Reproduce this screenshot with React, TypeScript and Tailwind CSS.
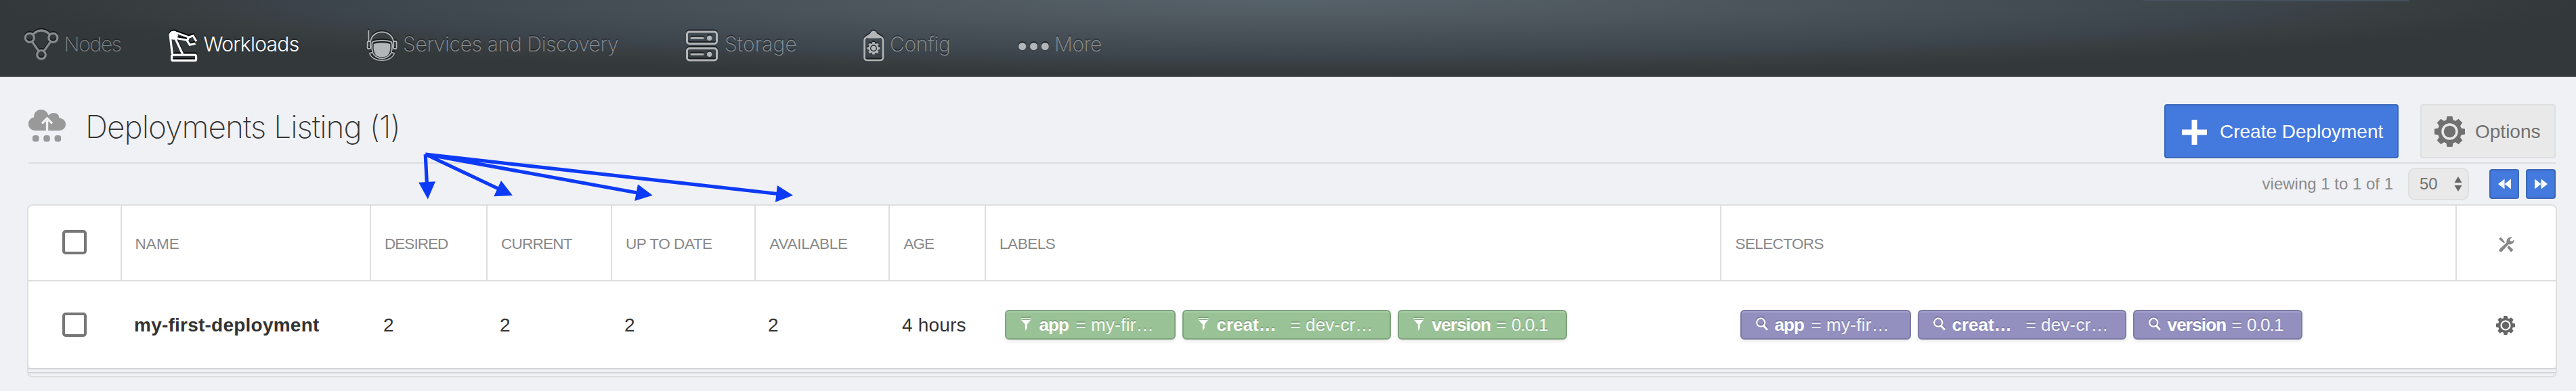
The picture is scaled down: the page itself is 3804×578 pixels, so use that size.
import type { ReactNode } from "react";

const NAV_SHADOW = "drop-shadow-[0_-2px_0_rgba(0,0,0,0.55)]";

function NodesIcon() {
  return (
    <svg width="52" height="52" viewBox="0 0 52 52" fill="none" stroke="#888c8e" strokeWidth="3.2" className={NAV_SHADOW}>
      <circle cx="7.8" cy="15.8" r="6.5" />
      <circle cx="42.4" cy="15.8" r="6.5" />
      <circle cx="25" cy="40.8" r="6.3" />
      <path d="M12.5 10.8 Q25 -0.8 37.5 10.8M11.5 21.5 21.3 35.6M38.7 21.5 28.7 35.6" />
    </svg>
  );
}

function RobotArmIcon() {
  return (
    <svg width="46" height="52" viewBox="0 0 46 52" fill="none" stroke="#fff" strokeWidth="3.2" className="drop-shadow-[0_-2px_0_#000]">
      <circle cx="7.2" cy="12.2" r="6.6" fill="#fff" stroke="none" />
      <path d="M2.4 14 5.4 40M10 17 20.8 40" />
      <path d="M8 7 29 14.6M11 16.5 27.5 19.3" strokeWidth="2.8" />
      <path d="M41 21 36.2 13 29.2 15.2 27.6 20.5 31.2 26.2 39.6 24.4" />
      <rect x="4.6" y="41.2" width="36" height="8.2" rx="2" />
    </svg>
  );
}

function HelmetIcon() {
  return (
    <svg width="46" height="52" viewBox="0 0 46 52" fill="none" stroke="#b3b6b8" strokeWidth="1.8" className={NAV_SHADOW}>
      <path d="M3.4 4.5V21" />
      <path d="M6.2 22C7.5 2.500 38.500 2.500 40 22" />
      <rect x="1.6" y="21" width="4.6" height="11" rx="1.5" />
      <rect x="40" y="21" width="4.6" height="11" rx="1.5" />
      <path d="M9.500 37C7.500 31 8 25 9 22 16 19.300 30 19.300 37.200 22 38.200 25 38.600 31 36.700 37" />
      <path d="M10.900 25C17 22.500 29 22.500 35.100 25 36 33 34.500 38.500 31 42.500 26 45 20 45 15 42.500 11.500 38.500 10 33 10.900 25Z" fill="#b3b6b8" stroke="none" />
      <path d="M9 37.500 4.800 38.500C5.500 43 12 49.300 23 49.300 34 49.300 40.500 43 41.200 38.500L37 37.500C34 43 30 46.500 23 46.500 16 46.500 12 43 9 37.500Z" strokeWidth="1.6" />
    </svg>
  );
}

function StorageIcon() {
  return (
    <svg width="50" height="52" viewBox="0 0 50 52" fill="none" stroke="#b3b6b8" strokeWidth="3" className={NAV_SHADOW}>
      <rect x="2.5" y="7" width="44" height="17.500" rx="3.500" />
      <rect x="2.5" y="31.500" width="44" height="17.500" rx="3.500" />
      <path d="M9 16.200H26M9 40.300H26" strokeLinecap="round" />
      <circle cx="35.700" cy="16.200" r="3.700" fill="#b3b6b8" stroke="none" />
      <circle cx="35.700" cy="40.300" r="3.700" fill="#b3b6b8" stroke="none" />
    </svg>
  );
}

function GearShape({ color }: { color: string }) {
  return (
    <g fill={color}>
      <circle r="9.300" fill="none" stroke={color} strokeWidth="3.400" />
      <circle r="5.400" />
      {[0, 45, 90, 135, 180, 225, 270, 315].map((a) => (
        <path key={a} d="M-3.300-9.800-2.500-14H2.500L3.300-9.800Z" transform={`rotate(${a})`} />
      ))}
    </g>
  );
}

function Gear({ size, color }: { size: number; color: string }) {
  return (
    <svg width={size} height={size} viewBox="-14 -14 28 28">
      <GearShape color={color} />
    </svg>
  );
}

function ConfigIcon() {
  return (
    <svg width="32" height="52" viewBox="0 0 32 52" className={NAV_SHADOW}>
      <path d="M2.500 20V44.500Q2.500 49 7 49H25.500Q30 49 30 44.500V20Q30 15.500 26 14.500H6.500Q2.500 15.500 2.500 20Z" fill="none" stroke="#b3b6b8" strokeWidth="2.600" />
      <path d="M3.500 14.500 11 9.500Q12.500 5.500 16 5.500T21 9.500L29 14.500 24 16.500H8.500Z" fill="#b3b6b8" />
      <g transform="translate(16 31.300) scale(0.66)">
        <GearShape color="#b3b6b8" />
      </g>
    </svg>
  );
}

function DotsIcon() {
  return (
    <svg width="48" height="52" viewBox="0 0 48 52" fill="#b3b6b8" className={NAV_SHADOW}>
      <circle cx="6.700" cy="28.500" r="5.500" />
      <circle cx="23.500" cy="28.500" r="5.500" />
      <circle cx="40.300" cy="28.500" r="5.500" />
    </svg>
  );
}

function NavItem({ icon, label, item, slot, text }: { icon: ReactNode; label: string; item: string; slot: string; text: string }) {
  return (
    <a className={`flex shrink-0 items-start ${item}`}>
      <span className={`shrink-0 ${slot}`}>{icon}</span>
      <span className={`whitespace-nowrap font-[Inter,sans-serif] text-[30px] leading-[50px] [text-shadow:0_-2px_0_rgba(0,0,0,0.4)] ${text}`}>{label}</span>
    </a>
  );
}

function CloudIcon() {
  return (
    <svg width="56" height="50" viewBox="0 0 56 50" fill="#999" className="shrink-0">
      <path d="M10.500 31C4 31 0 26.500 0 21.500 0 16 3.500 12 8 11.500 8 4 13 0 18.500 0 24 0 28 3.500 29.500 8.500 31.500 6 34.500 5 37.500 5 42.500 5 45.500 8.500 45.500 12.500 51 13 55 16.500 55 21.500 55 27 51 31 45 31Z" />
      <path d="M27.500 31.500V15M20 20.500 27.500 13 35 20.500" fill="none" stroke="#f0f1f5" strokeWidth="3.400" />
      <rect x="6" y="38" width="9.500" height="9.500" rx="3.500" />
      <rect x="22.300" y="38" width="9.500" height="9.500" rx="3.500" />
      <rect x="38.600" y="38" width="9.500" height="9.500" rx="3.500" />
    </svg>
  );
}

function ToolsIcon() {
  return (
    <svg width="23" height="23" viewBox="0 0 22 22" fill="#888">
      <path d="M0 3 2.800 .8 5.300 3 8.500 8 7.300 9 3 5.800Z" />
      <path d="M14 12.500 20.500 18.500 17.500 21.700 11.800 15.200Z" />
      <path d="M1 17.500 11 8.300C10.200 4 13.500-.5 18.800 .5L15.800 3.500 16.200 6 18.800 6.400 21.800 4C22 8.500 18.500 11.500 13.800 10.800L4 21.200Q1.800 22 .5 20Z" />
    </svg>
  );
}

function FunnelIcon() {
  return (
    <svg width="17" height="20" viewBox="0 0 17 20" fill="#fff" className="drop-shadow-[0_-2px_0_rgba(0,0,0,0.18)]">
      <path d="M.5 1.500H15.500V3H.5ZM1 4H15L9.800 10.500V16L7.300 19.500H6.800V10.500Z" />
    </svg>
  );
}

function SearchIcon() {
  return (
    <svg width="18" height="20" viewBox="0 0 18 20" fill="none" stroke="#fff" className="drop-shadow-[0_-2px_0_rgba(0,0,0,0.18)]">
      <circle cx="7.200" cy="7.700" r="6" strokeWidth="2.200" />
      <path d="M11 12 16.800 18.600" strokeWidth="3" />
    </svg>
  );
}

interface Tag {
  name: string;
  value: string;
  box: string;
  nameClass: string;
  valueClass: string;
}

const TAGS: Tag[] = [
  { name: "app", value: "my-fir…", box: "w-[252px]", nameClass: "w-[54px] tracking-[-0.9px]", valueClass: "tracking-[0.3px]" },
  { name: "creat…", value: "dev-cr…", box: "w-[308px]", nameClass: "w-[109px]", valueClass: "tracking-[0.2px]" },
  { name: "version", value: "0.0.1", box: "w-[250px]", nameClass: "w-[95px] tracking-[-0.8px]", valueClass: "tracking-[-0.85px]" },
];

function Tags({ icon, tone }: { icon: ReactNode; tone: string }) {
  return (
    <div className="flex gap-[10px] pl-[28px]">
      {TAGS.map((t) => (
        <span
          key={t.name}
          className={`flex h-[44px] items-center rounded-[6px] border-2 pl-[21px] text-[26px] leading-[40px] text-white whitespace-nowrap [text-shadow:0_-2px_0_rgba(0,0,0,0.18)] ${tone} ${t.box}`}
        >
          <span className="w-[27.500px] shrink-0 pb-[2px]">{icon}</span>
          <b className={`shrink-0 ${t.nameClass}`}>{t.name}</b>
          <span className="w-[22.500px] shrink-0 text-white/80">=</span>
          <span className={`text-white/95 ${t.valueClass}`}>{t.value}</span>
        </span>
      ))}
    </div>
  );
}

function Checkbox({ className = "" }: { className?: string }) {
  return <span className={`mx-auto block size-[36px] rounded-[5px] border-4 border-[#777] bg-white ${className}`} />;
}

const COLS = "grid grid-cols-[138px_368px_172px_184px_212px_198px_142px_1086px_1086px_146px]";

const HEADS = [
  { t: "NAME", c: "pl-[19.500px] tracking-[0.1px]" },
  { t: "DESIRED", c: "pl-[20px] tracking-[-0.95px]" },
  { t: "CURRENT", c: "pl-[20px] tracking-[-0.73px]" },
  { t: "UP TO DATE", c: "pl-[20px] tracking-[-0.45px]" },
  { t: "AVAILABLE", c: "pl-[20.500px] tracking-[-0.31px]" },
  { t: "AGE", c: "pl-[20.500px] tracking-[-1px]" },
  { t: "LABELS", c: "pl-[20px] tracking-[-0.44px]" },
  { t: "SELECTORS", c: "pl-[20.500px] tracking-[-0.62px]" },
];

function Arrows() {
  return (
    <svg width="580" height="90" viewBox="610 215 580 90" className="pointer-events-none absolute left-[610px] top-[215px]" fill="#0d3af6">
      <path d="M628.200 228 630.300 270M628.200 228 736 279M628.200 228 941 285M628.200 228 1148 286.500" fill="none" stroke="#0d3af6" strokeWidth="5.200" />
      <path d="M618.200 269.700 643 268.300 631.800 294.500ZM740 267 729.300 290.200 757 289ZM942 272.500 937.200 297 963.700 288.800ZM1147.800 274 1145 298.800 1171 288.800Z" />
    </svg>
  );
}

export default function App() {
  return (
    <div className="relative flex h-[578px] w-[3804px] flex-col overflow-hidden bg-[#f0f1f5] font-['Liberation_Sans',Arial,sans-serif]">
      <header className="flex h-[114px] shrink-0 items-start border-b-2 border-[#4f5558] bg-[radial-gradient(1902px_112px_at_50%_0,#56626a_0%,#4c545b_38%,#3c444c_75%,#393e41_86%,#33383b_100%)] pl-[36px]">
        <nav className="flex h-[50px] flex-1 pt-[40px]">
          <NavItem icon={<NodesIcon />} label="Nodes" item="w-[213px]" slot="w-[58.500px]" text="font-extralight tracking-[-1.3px] text-[#7e8385]" />
          <NavItem icon={<RobotArmIcon />} label="Workloads" item="w-[292px]" slot="w-[51.500px]" text="font-light tracking-[-0.7px] text-white" />
          <NavItem icon={<HelmetIcon />} label="Services and Discovery" item="w-[471px]" slot="w-[54px]" text="font-extralight tracking-[-0.27px] text-[#8c9194]" />
          <NavItem icon={<StorageIcon />} label="Storage" item="w-[262px]" slot="w-[58px]" text="font-extralight tracking-[0.2px] text-[#8c9194]" />
          <NavItem icon={<ConfigIcon />} label="Config" item="w-[229px]" slot="w-[40px]" text="font-extralight tracking-[-0.25px] text-[#8c9194]" />
          <NavItem icon={<DotsIcon />} label="More" item="w-[140px]" slot="w-[54px]" text="font-extralight tracking-[-0.4px] text-[#8c9194]" />
        </nav>
        <div className="mr-[247px] h-[2px] w-[392px] bg-[#45515c]" />
      </header>

      <section className="ml-[42px] mr-[30px] flex h-[128px] shrink-0 items-start justify-between border-b-2 border-[#dcdddd] pt-[40px]">
        <div className="flex h-[66px] items-center">
          <CloudIcon />
          <h1 className="ml-[28px] whitespace-nowrap font-[Inter,sans-serif] text-[46px] font-extralight leading-[66px] tracking-[-0.97px] text-[#333]">Deployments Listing (1)</h1>
        </div>
        <div className="flex gap-[32px] text-[28px]">
          <button className="flex h-[80px] w-[346px] items-center whitespace-nowrap rounded-[4px] border-2 border-[#3a68b8] bg-[#4479dd] pl-[24px] text-white">
            <svg width="37" height="37" viewBox="0 0 37 37" className="mr-[19px] mt-[3px]" fill="#fff">
              <path d="M14.500 0H22.500V14.500H37V22.500H22.500V37H14.500V22.500H0V14.500H14.500Z" />
            </svg>
            <span className="pt-[1px]">Create Deployment</span>
          </button>
          <button className="flex h-[80px] w-[200px] items-center whitespace-nowrap rounded-[4px] border-2 border-[#dedfdf] bg-[#e9e9e9] pl-[19px] text-[#707070]">
            <span className="mr-[15px]">
              <Gear size={45} color="#707070" />
            </span>
            <span className="pt-[1px]">Options</span>
          </button>
        </div>
      </section>

      <div className="mr-[30px] flex h-[60px] shrink-0 items-center justify-end">
        <span className="mr-[22px] whitespace-nowrap text-[24px] text-[#8a8a8a]">viewing 1 to 1 of 1</span>
        <div className="mr-[30px] flex h-[48px] w-[90px] items-center rounded-[10px] border-2 border-[#dedfdf] bg-[#e9e9e9] pl-[15px] text-[24px] text-[#707070]">
          50
          <svg width="12" height="22" viewBox="0 0 12 22" className="ml-[24px]" fill="#666">
            <path d="M6 0 11.500 9H.5ZM.5 13H11.500L6 22Z" />
          </svg>
        </div>
        <button className="mr-[10px] flex h-[44px] w-[44px] items-center justify-center rounded-[4px] border-2 border-[#3a68b8] bg-[#4479dd]">
          <svg width="19" height="16" viewBox="0 0 19 16" fill="#fff"><path d="M9.500 .5V15.500L0 8ZM19 .5V15.500L9.500 8Z" /></svg>
        </button>
        <button className="flex h-[44px] w-[44px] items-center justify-center rounded-[4px] border-2 border-[#3a68b8] bg-[#4479dd]">
          <svg width="19" height="16" viewBox="0 0 19 16" fill="#fff"><path d="M0 .5V15.500L9.500 8ZM9.500 .5V15.500L19 8Z" /></svg>
        </button>
      </div>

      <main className="ml-[40px] mr-[28px] flex h-[256px] shrink-0 flex-col overflow-hidden rounded-[8px] border-2 border-[#dedede]">
        <div className={`${COLS} h-[112px] border-b-2 border-[#dedede] bg-white text-[22.500px] text-[#888]`}>
          <div className="flex items-center border-r-2 border-[#dedede]">
            <Checkbox className="mb-[2px]" />
          </div>
          {HEADS.map((h) => (
            <div key={h.t} className={`flex items-center whitespace-nowrap border-r-2 border-[#dedede] pt-[3px] ${h.c}`}>{h.t}</div>
          ))}
          <div className="flex items-center justify-center pt-[4px]">
            <ToolsIcon />
          </div>
        </div>
        <div className={`${COLS} h-[128px] items-center rounded-b-[6px] bg-white text-[28px] text-[#333]`}>
          <Checkbox className="relative left-[-1px]" />
          <b className="whitespace-nowrap pl-[18px] pt-[1px] tracking-[0.23px]">my-first-deployment</b>
          <span className="pl-[18px] pt-[1px]">2</span>
          <span className="pl-[18px] pt-[1px]">2</span>
          <span className="pl-[18px] pt-[1px]">2</span>
          <span className="pl-[18px] pt-[1px]">2</span>
          <span className="whitespace-nowrap pl-[18px] pt-[1px] tracking-[0.2px]">4 hours</span>
          <Tags icon={<FunnelIcon />} tone="border-[#7da37c] bg-[#9ac297] shadow-[inset_0_2px_0_#a9cca7,0_3px_4px_rgba(0,0,0,0.08)]" />
          <Tags icon={<SearchIcon />} tone="border-[#7c7aa4] bg-[#9390c0] shadow-[inset_0_2px_0_#a3a1cb,0_3px_4px_rgba(0,0,0,0.08)]" />
          <span className="mx-auto pr-[2px] pt-[2px]">
            <Gear size={28} color="#666" />
          </span>
        </div>
        <div className="h-[2px] bg-[#d3d4d5]" />
        <div className="h-[4px]" />
        <div className="h-[2px] bg-[#d3d4d5]" />
      </main>

      <Arrows />
    </div>
  );
}
